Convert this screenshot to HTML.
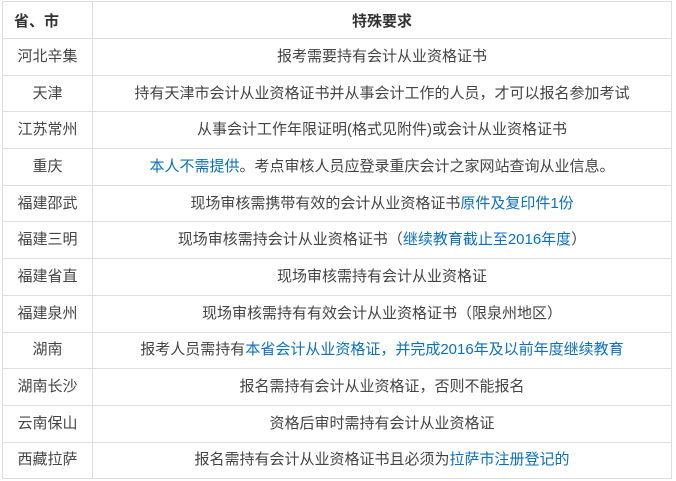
<!DOCTYPE html><html><head><meta charset="utf-8"><style>
body{margin:0;background:#fff;width:676px;height:481px;overflow:hidden;font-family:"Liberation Sans","Noto Sans CJK SC",sans-serif;font-size:15px;color:#444}
table{position:absolute;left:2px;top:1px;border-collapse:collapse;width:670px}
td{border:1px solid #ddd;height:35.7px;padding:0;text-align:center;line-height:16px}
td.a{width:89px}
th{border:1px solid #ddd;height:36px;font-weight:bold;color:#333;padding:0;font-size:15px}
th.a{text-align:left;padding-left:11px}
.b{color:#0b6fc2}
</style></head><body><table>
<tr><th class="a">省、市</th><th>特殊要求</th></tr>
<tr><td class="a">河北辛集</td><td>报考需要持有会计从业资格证书</td></tr>
<tr><td class="a">天津</td><td>持有天津市会计从业资格证书并从事会计工作的人员，才可以报名参加考试</td></tr>
<tr><td class="a">江苏常州</td><td>从事会计工作年限证明(格式见附件)或会计从业资格证书</td></tr>
<tr><td class="a">重庆</td><td><span class="b">本人不需提供</span>。考点审核人员应登录重庆会计之家网站查询从业信息。</td></tr>
<tr><td class="a">福建邵武</td><td>现场审核需携带有效的会计从业资格证书<span class="b">原件及复印件1份</span></td></tr>
<tr><td class="a">福建三明</td><td>现场审核需持会计从业资格证书（<span class="b">继续教育截止至2016年度</span>）</td></tr>
<tr><td class="a">福建省直</td><td>现场审核需持有会计从业资格证</td></tr>
<tr><td class="a">福建泉州</td><td>现场审核需持有有效会计从业资格证书（限泉州地区）</td></tr>
<tr><td class="a">湖南</td><td>报考人员需持有<span class="b">本省会计从业资格证，并完成2016年及以前年度继续教育</span></td></tr>
<tr><td class="a">湖南长沙</td><td>报名需持有会计从业资格证，否则不能报名</td></tr>
<tr><td class="a">云南保山</td><td>资格后审时需持有会计从业资格证</td></tr>
<tr><td class="a">西藏拉萨</td><td>报名需持有会计从业资格证书且必须为<span class="b">拉萨市注册登记的</span></td></tr>
</table></body></html>
